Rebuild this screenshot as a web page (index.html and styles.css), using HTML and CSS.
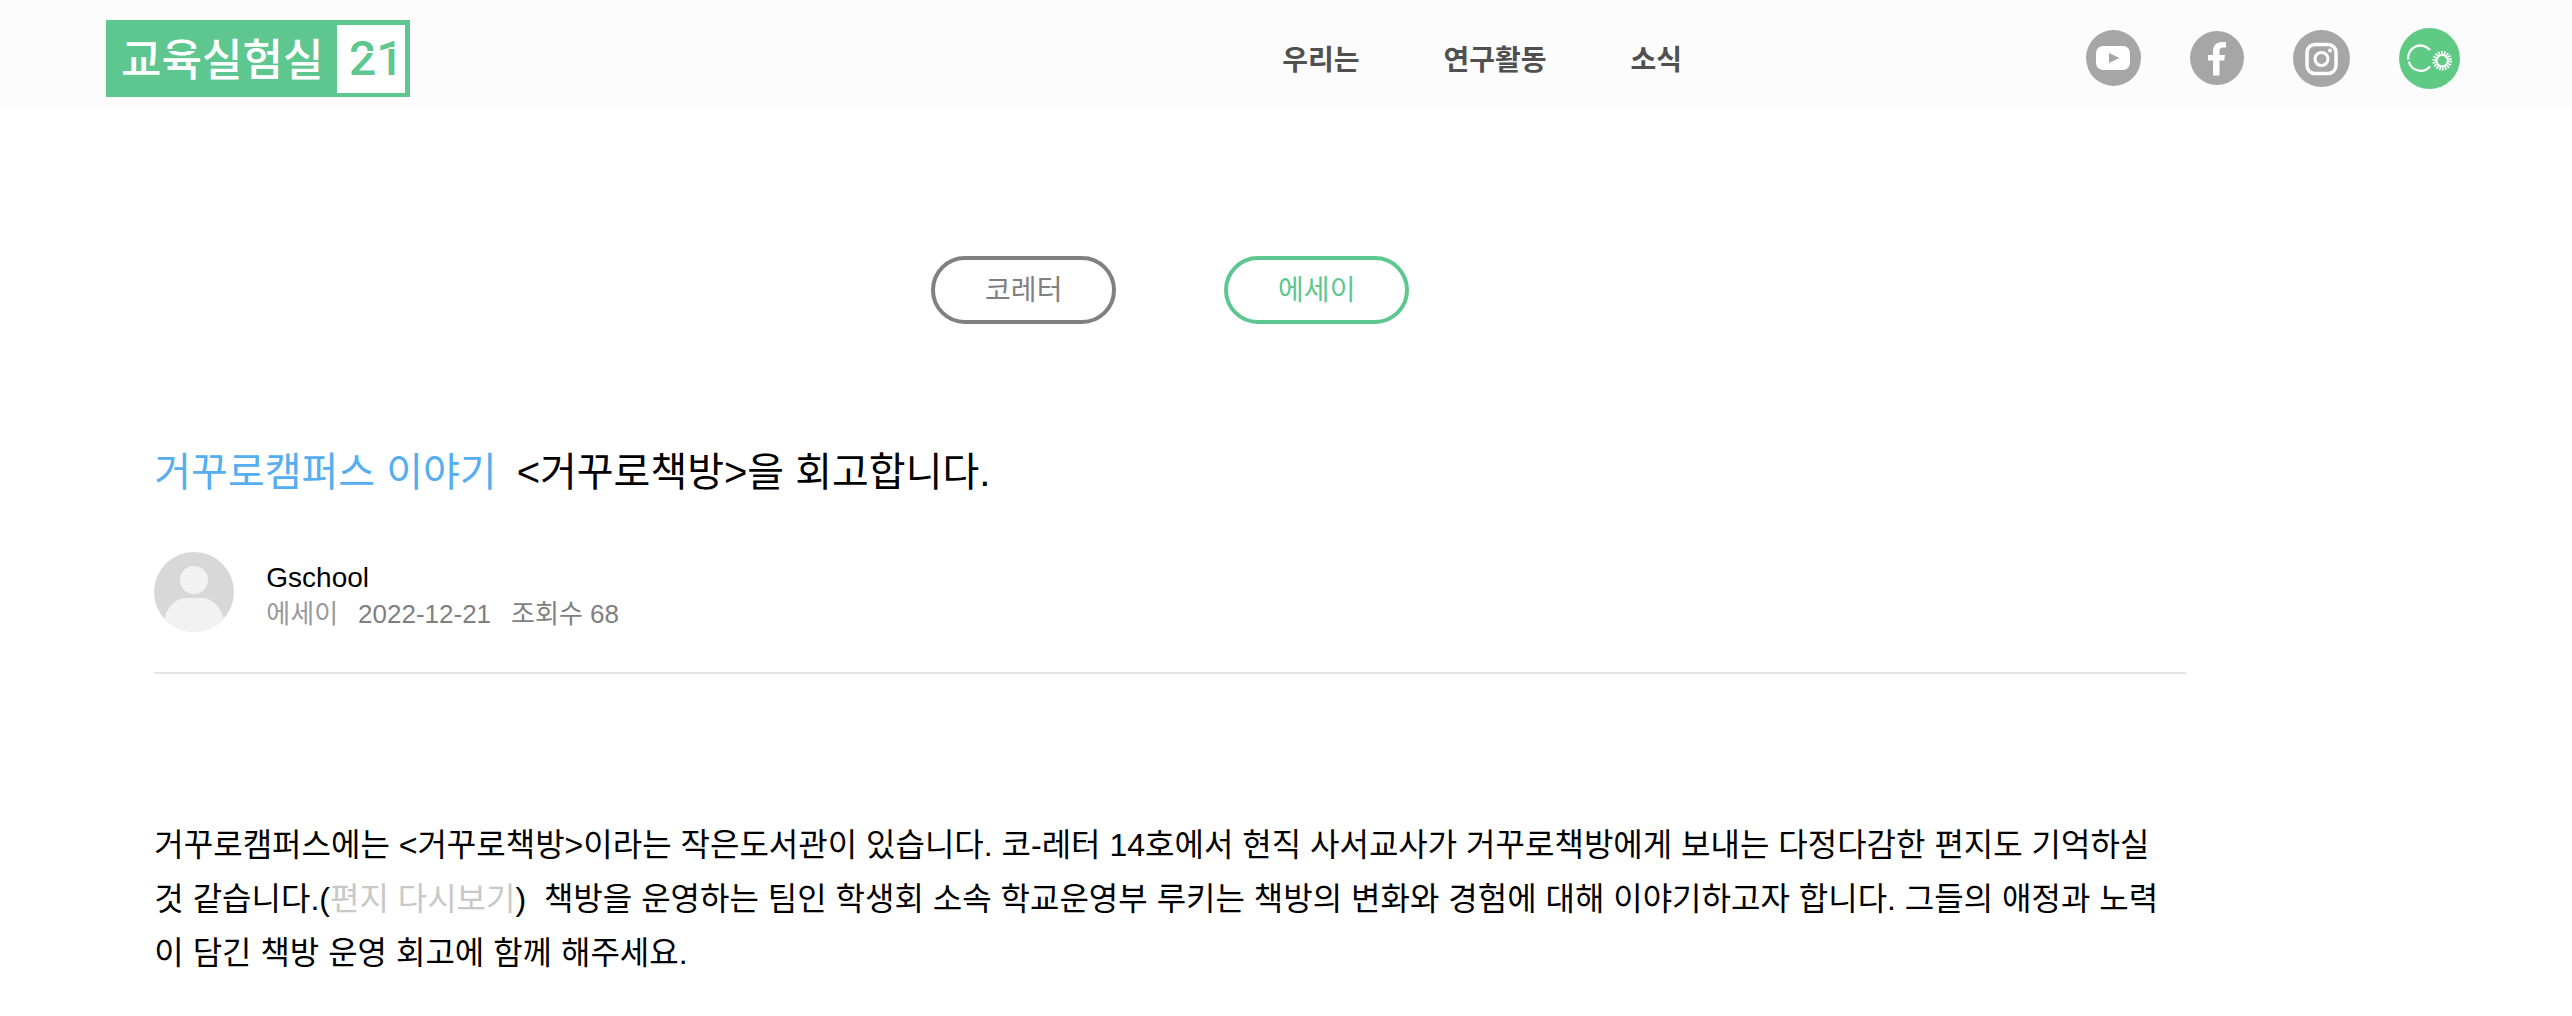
FILE: index.html
```
<!DOCTYPE html>
<html lang="ko">
<head>
  <meta charset="UTF-8">
  <title>교육실험실21</title>
  <meta name="viewport" content="width=device-width, initial-scale=1">
  <link rel="stylesheet" href="styles.css">
</head>
<body>

  <header class="header">
    <a class="logo" href="#" aria-label="교육실험실 21">
      <svg width="304" height="77" viewBox="0 0 304 77">
        <rect width="304" height="77" fill="#5dc78f"/>
        <rect x="231" y="5" width="68" height="68" fill="#fff"/>
        <text class="logo-name" x="15" y="56">교육실험실</text>
        <text class="logo-number" x="243" y="55">21</text>
        <!-- 스텐실 절개선 -->
        <path d="M58 30h36M122 41h13M204 41h13" stroke="#5dc78f" stroke-width="2"/>
        <path d="M256 32h14M283 28h8" stroke="#fff" stroke-width="2"/>
      </svg>
    </a>

    <!-- 메인 메뉴 -->
    <nav class="nav">
      <a href="#">우리는</a>
      <a href="#">연구활동</a>
      <a href="#">소식</a>
    </nav>

    <!-- SNS 링크 -->
    <div class="social">
      <a href="#" aria-label="YouTube">
        <svg width="55" height="56" viewBox="0 0 55 56">
          <ellipse cx="27.5" cy="28" rx="27.5" ry="28" fill="#a6a6a6"/>
          <rect x="10" y="16" width="34" height="24" rx="7" fill="#fff"/>
          <path d="M23 23v10l10.500-5z" fill="#a6a6a6"/>
        </svg>
      </a>
      <a href="#" aria-label="Facebook">
        <svg width="54" height="54" viewBox="0 0 54 54">
          <circle cx="27" cy="27" r="27" fill="#a6a6a6"/>
          <path d="M23 44.500V29.500h-5V24h5v-3.500c0-6 3.500-9.500 9-9.500h4v5.500h-3c-2.500 0-3.500 1.500-3.500 4V24H35l-.8 5.500h-4.700v15z" fill="#fff"/>
        </svg>
      </a>
      <a href="#" aria-label="Instagram">
        <svg width="57" height="57" viewBox="0 0 57 57">
          <circle cx="28.500" cy="28.500" r="28.500" fill="#a6a6a6"/>
          <rect x="14" y="14.500" width="29" height="29" rx="8" fill="none" stroke="#fff" stroke-width="3.500"/>
          <circle cx="28.500" cy="29" r="6.500" fill="none" stroke="#fff" stroke-width="3"/>
          <circle cx="37" cy="20.500" r="2" fill="#fff"/>
        </svg>
      </a>
      <a href="#" aria-label="Co">
        <svg width="61" height="61" viewBox="0 0 61 61">
          <circle cx="30.500" cy="30.500" r="30.500" fill="#5eca84"/>
          <path d="M31 22a12.300 12.300 0 0 0-21.700 9.500M9.800 33.500A12.300 12.300 0 0 0 31 38.500" fill="none" stroke="#fff" stroke-width="2.300"/>
          <circle cx="43.200" cy="32.800" r="5.700" fill="none" stroke="#fff" stroke-width="2"/>
          <circle cx="43.200" cy="32.800" r="8" fill="none" stroke="#fff" stroke-width="3.600" stroke-dasharray="1.600 1.192"/>
        </svg>
      </a>
    </div>
  </header>

  <main class="content">
    <div class="tabs">
      <button class="tab" type="button">코레터</button>
      <button class="tab active" type="button">에세이</button>
    </div>

    <article>
      <h1 class="title"><span class="category">거꾸로캠퍼스 이야기</span>&lt;거꾸로책방&gt;을 회고합니다.</h1>

      <div class="author">
        <svg class="avatar" viewBox="0 0 80 80">
          <clipPath id="face"><circle cx="40" cy="40" r="40"/></clipPath>
          <g clip-path="url(#face)">
            <rect width="80" height="80" fill="#d8d8d8"/>
            <circle cx="40" cy="28" r="14" fill="#f2f2f2"/>
            <path d="M10 80V70c2-14 11-24 23-24h14c12 0 21 10 23 24v10z" fill="#f2f2f2"/>
          </g>
        </svg>
        <div class="author-info">
          <div class="name">Gschool</div>
          <div class="meta">
            <span class="board">에세이</span>
            <span>2022-12-21</span>
            <span>조회수 68</span>
          </div>
        </div>
      </div>

      <p class="text">거꾸로캠퍼스에는 &lt;거꾸로책방&gt;이라는 작은도서관이 있습니다. 코-레터 14호에서 현직 사서교사가 거꾸로책방에게 보내는 다정다감한 편지도 기억하실 것 같습니다.(<a href="#">편지 다시보기</a>)&nbsp; 책방을 운영하는 팀인 학생회 소속 학교운영부 루키는 책방의 변화와 경험에 대해 이야기하고자 합니다. 그들의 애정과 노력이 담긴 책방 운영 회고에 함께 해주세요.</p>
    </article>
  </main>

</body>
</html>
```
FILE: styles.css
```
* {
  box-sizing: border-box;
}
body {
  margin: 0;
  background: #fff;
  color: #000;
  font-family: "Liberation Sans", "Noto Sans CJK KR", sans-serif;
}
a {
  text-decoration: none;
}

/* 상단 헤더 */
.header {
  display: flex;
  align-items: center;
  height: 105px;
  padding: 11px 112px 0 106px;
  background: #fcfcfc;
}
.logo svg,
.social svg {
  display: block;
}
.logo-name {
  font: 500 44px "Noto Sans CJK KR", sans-serif;
  fill: #fff;
}
.logo-number {
  font: 500 48px Roboto, sans-serif;
  fill: #5dc78f;
}
.nav {
  display: flex;
  gap: 84px;
  margin-left: auto;
  margin-right: 404px;
}
.nav a {
  color: #505050;
  font: 700 28px/40px "Noto Sans CJK KR", sans-serif;
}
.social {
  display: flex;
  align-items: center;
  gap: 49px;
}

.content {
  padding: 151px 15% 0 6%;
}

/* 게시판 탭 */
.tabs {
  display: flex;
  justify-content: center;
  gap: 108px;
}
.tab {
  width: 185px;
  height: 68px;
  padding: 0 0 4px;
  border: 4px solid #808080;
  border-radius: 34px;
  background: #fff;
  color: #808080;
  font: 400 28px "Noto Sans CJK KR", sans-serif;
  cursor: pointer;
}
.tab.active {
  border-color: #5dc78f;
  color: #5dc78f;
}

/* 글 제목, 작성자 */
.title {
  margin: 118px 0 0;
  font-size: 40px;
  font-weight: 400;
  line-height: 60px;
}
.category {
  margin-right: 20px;
  color: #54aef0;
}
.author {
  display: flex;
  align-items: center;
  gap: 32px;
  margin-top: 50px;
  padding-bottom: 40px;
  border-bottom: 2px solid #e4e4e4;
}
.avatar {
  width: 80px;
  height: 80px;
}
.author-info {
  padding-top: 7px;
}
.name {
  font-size: 28px;
  line-height: 36px;
}
.meta {
  display: flex;
  gap: 20px;
  color: #808080;
  font-size: 26px;
  line-height: 36px;
}
.board {
  color: #999;
}

/* 본문 */
.text {
  margin: 144px 0 0;
  font-size: 32px;
  line-height: 54px;
}
.text a {
  color: #c8c8c8;
}
```
